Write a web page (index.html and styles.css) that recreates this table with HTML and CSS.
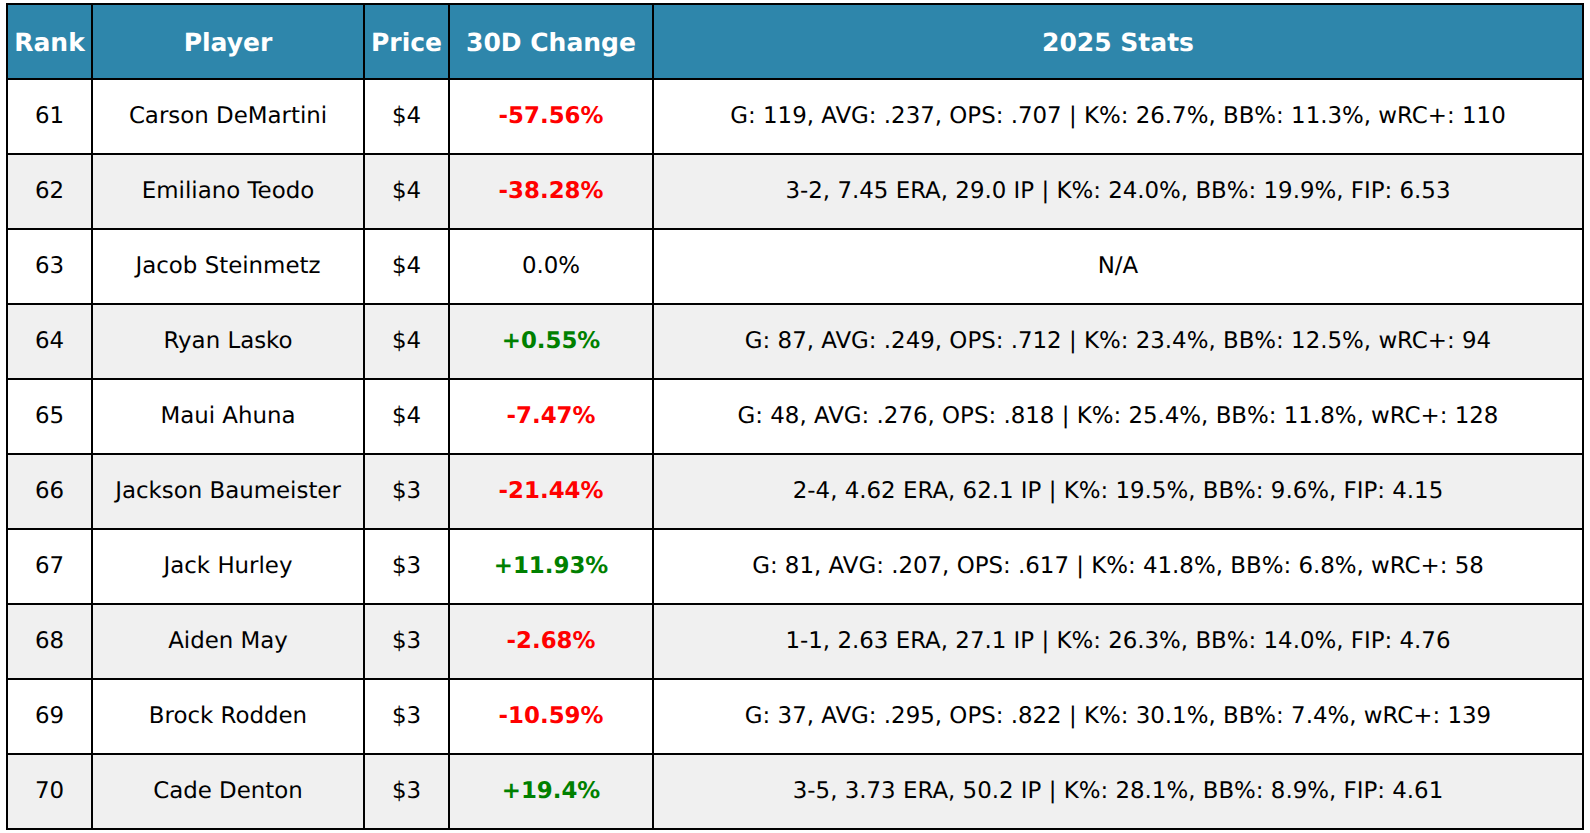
FILE: index.html
```html
<!DOCTYPE html>
<html>
<head>
<meta charset="utf-8">
<link rel="stylesheet" href="styles.css">
</head>
<body>
<table class="tbl">
  <colgroup>
    <col class="c-rank"><col class="c-player"><col class="c-price"><col class="c-change"><col class="c-stats">
  </colgroup>
  <thead>
    <tr><th>Rank</th><th>Player</th><th>Price</th><th>30D Change</th><th>2025 Stats</th></tr>
  </thead>
  <tbody>
    <tr><td>61</td><td>Carson DeMartini</td><td>$4</td><td class="neg">-57.56%</td><td>G: 119, AVG: .237, OPS: .707 | K%: 26.7%, BB%: 11.3%, wRC+: 110</td></tr>
    <tr class="alt"><td>62</td><td>Emiliano Teodo</td><td>$4</td><td class="neg">-38.28%</td><td>3-2, 7.45 ERA, 29.0 IP | K%: 24.0%, BB%: 19.9%, FIP: 6.53</td></tr>
    <tr><td>63</td><td>Jacob Steinmetz</td><td>$4</td><td>0.0%</td><td>N/A</td></tr>
    <tr class="alt"><td>64</td><td>Ryan Lasko</td><td>$4</td><td class="pos">+0.55%</td><td>G: 87, AVG: .249, OPS: .712 | K%: 23.4%, BB%: 12.5%, wRC+: 94</td></tr>
    <tr><td>65</td><td>Maui Ahuna</td><td>$4</td><td class="neg">-7.47%</td><td>G: 48, AVG: .276, OPS: .818 | K%: 25.4%, BB%: 11.8%, wRC+: 128</td></tr>
    <tr class="alt"><td>66</td><td>Jackson Baumeister</td><td>$3</td><td class="neg">-21.44%</td><td>2-4, 4.62 ERA, 62.1 IP | K%: 19.5%, BB%: 9.6%, FIP: 4.15</td></tr>
    <tr><td>67</td><td>Jack Hurley</td><td>$3</td><td class="pos">+11.93%</td><td>G: 81, AVG: .207, OPS: .617 | K%: 41.8%, BB%: 6.8%, wRC+: 58</td></tr>
    <tr class="alt"><td>68</td><td>Aiden May</td><td>$3</td><td class="neg">-2.68%</td><td>1-1, 2.63 ERA, 27.1 IP | K%: 26.3%, BB%: 14.0%, FIP: 4.76</td></tr>
    <tr><td>69</td><td>Brock Rodden</td><td>$3</td><td class="neg">-10.59%</td><td>G: 37, AVG: .295, OPS: .822 | K%: 30.1%, BB%: 7.4%, wRC+: 139</td></tr>
    <tr class="alt"><td>70</td><td>Cade Denton</td><td>$3</td><td class="pos">+19.4%</td><td>3-5, 3.73 ERA, 50.2 IP | K%: 28.1%, BB%: 8.9%, FIP: 4.61</td></tr>
  </tbody>
</table>
</body>
</html>
```
FILE: styles.css
```css
html, body {
  margin: 0;
  padding: 0;
  background: #ffffff;
}
body {
  padding: 3px 0 0 6px;
  font-family: "DejaVu Sans", sans-serif;
  text-rendering: geometricPrecision;
}
.tbl {
  border-collapse: separate;
  border-spacing: 0;
  table-layout: fixed;
  width: 1578px;
  border-left: 2px solid #000;
  border-top: 2px solid #000;
}
.c-rank { width: 85px; }
.c-player { width: 272px; }
.c-price { width: 85px; }
.c-change { width: 204px; }
.c-stats { width: 930px; }
.tbl th, .tbl td {
  box-sizing: border-box;
  height: 75px;
  padding: 0;
  border-right: 2px solid #000;
  border-bottom: 2px solid #000;
  text-align: center;
  vertical-align: middle;
  white-space: nowrap;
  color: #000;
}
.tbl th {
  background: #2e86ab;
  color: #fff;
  font-weight: bold;
  font-size: 25px;
  padding-top: 1px;
}
.tbl td {
  font-size: 22.9px;
  background: #fff;
  padding-bottom: 1px;
}
.tbl tr.alt td {
  background: #f0f0f0;
}
.tbl td.neg {
  color: #ff0000;
  font-weight: bold;
}
.tbl td.pos {
  color: #008000;
  font-weight: bold;
}
```
